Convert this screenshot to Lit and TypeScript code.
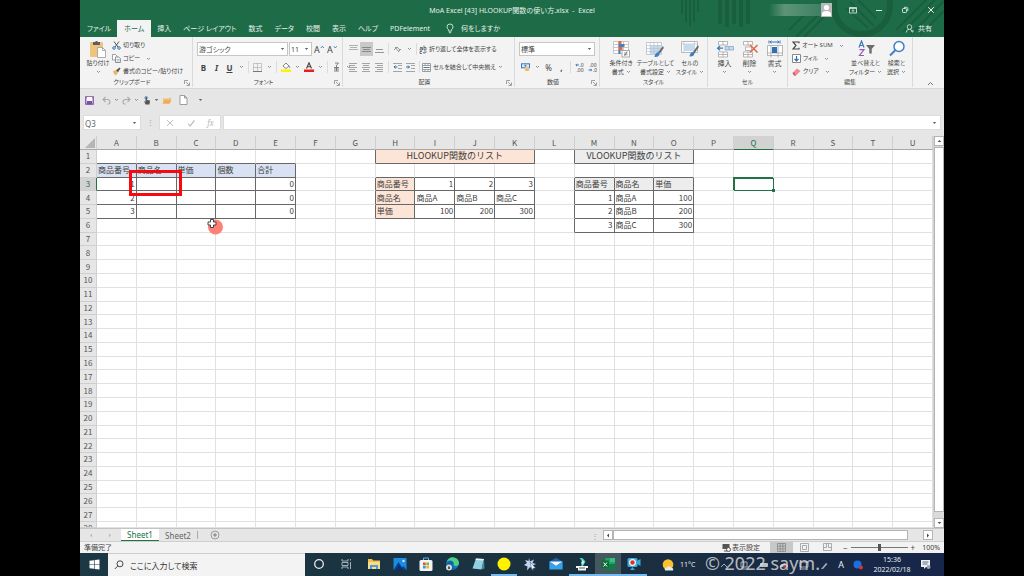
import { LitElement, html, svg, css, nothing } from "lit";
import { customElement, state } from "lit/decorators.js";
import { classMap } from "lit/directives/class-map.js";

type Cell = { t: string; num?: boolean; fill?: string; span?: number; title?: boolean };

const COLS = "ABCDEFGHIJKLMNOPQRSTU".split("");
const ROWS = Array.from({ length: 28 }, (_, i) => i + 1);

const CELLS: Record<string, Cell> = {};
const put = (row: number, col: string, values: (string | number)[], fill = "") => {
  values.forEach((v, i) => {
    const key = COLS[COLS.indexOf(col) + i] + row;
    CELLS[key] = { t: String(v), num: typeof v === "number", fill };
  });
};
put(2, "A", ["商品番号", "商品名", "単価", "個数", "合計"], "blue");
put(3, "A", [1, "", "", "", 0]);
put(4, "A", [2, "", "", "", 0]);
put(5, "A", [3, "", "", "", 0]);
CELLS["H1"] = { t: "HLOOKUP関数のリスト", span: 4, fill: "peach", title: true };
CELLS["M1"] = { t: "VLOOKUP関数のリスト", span: 3, fill: "grey", title: true };
put(3, "I", [1, 2, 3]);
put(4, "I", ["商品A", "商品B", "商品C"]);
put(5, "I", [100, 200, 300]);
put(3, "H", ["商品番号"], "peach");
put(4, "H", ["商品名"], "peach");
put(5, "H", ["単価"], "peach");
put(3, "M", ["商品番号", "商品名", "単価"], "grey");
put(4, "M", [1, "商品A", 100]);
put(5, "M", [2, "商品B", 200]);
put(6, "M", [3, "商品C", 300]);

const chev = html`<svg class="chev" viewBox="0 0 5 4" aria-hidden="true"><path d="M1 1l1.5 1.5L4 1" fill="none" stroke="#777" stroke-width=".8"/></svg>`;
const caret = html`<svg class="caret" viewBox="0 0 5 4" aria-hidden="true"><path d="M.8 1h3.4L2.5 3z" fill="#666"/></svg>`;
const icon = (w: number, h: number, body: unknown) =>
  html`<svg width=${w} height=${h} viewBox="0 0 ${w} ${h}" aria-hidden="true">${body}</svg>`;

const lines = (list: number[][], color = "#8a8a8a") =>
  list.map(([x1, x2, y]) => svg`<path d="M${x1} ${y}H${x2}" stroke=${color} stroke-width="1"/>`);

const I = {
  paste: icon(18, 18, svg`<rect x="1" y="2" width="13" height="15" rx="1" fill="#efc57d"/><path d="M4 2h2q1.500-2 3 0h2v3H4z" fill="#5d5d5d"/><path d="M8.500 7.500h5l3 3v7h-8z" fill="#fff" stroke="#9a9a9a" stroke-width=".8"/><path d="M13.500 7.500v3h3" fill="none" stroke="#9a9a9a" stroke-width=".8"/>`),
  cut: icon(9, 9, svg`<path d="M2 .5l4 5.500M7 .5L3 6" stroke="#555" fill="none"/><circle cx="2" cy="7" r="1.300" fill="none" stroke="#3b78b8"/><circle cx="7" cy="7" r="1.300" fill="none" stroke="#3b78b8"/>`),
  copy: icon(9, 9, svg`<path d="M.5.5h3l1.500 1.500v4H.5z" fill="#fff" stroke="#8b8b8b" stroke-width=".8"/><path d="M3.500 3h3L8.400 4.500v4H3.500z" fill="#fff" stroke="#777" stroke-width=".8"/><path d="M4.500 5.500h3M4.500 7h3" stroke="#5b8cc4" stroke-width=".6"/>`),
  brush: icon(9, 9, svg`<path d="M.8 4l3.400-.8 1.800 1.800L4 8.500Q1.500 7 .8 4z" fill="#efb45d"/><path d="M4 3.200l2 2 2.500-4-.8-.8z" fill="#555"/>`),
  grow: icon(5, 9, svg`<path d="M.8 3L2.300 1.200 3.800 3" fill="none" stroke="#3b78b8" stroke-width=".9"/>`),
  shrink: icon(5, 9, svg`<path d="M.8 1.200L2.300 3 3.800 1.200" fill="none" stroke="#3b78b8" stroke-width=".9"/>`),
  border: icon(9, 9, svg`<path d="M.5.5h8v8h-8zM4.500.5v8M.5 4.500h8" fill="none" stroke="#9b9b9b" stroke-dasharray="1 1"/><path d="M0 8.500h9" stroke="#777"/>`),
  fill: icon(10, 10, svg`<path d="M2 4l3-3 3 3-3 2.500z" fill="#fff" stroke="#666" stroke-width=".8"/><path d="M8.400 3.500q1.600 2 0 2.800z" fill="#3b78b8"/><rect x="0" y="7.500" width="10" height="2.500" fill="#fff200"/>`),
  fontcolor: icon(10, 10, svg`<path d="M2.500 6.500L5 .8l2.500 5.700M3.400 4.700h3.200" fill="none" stroke="#444" stroke-width="1.100"/><rect x="0" y="7.500" width="10" height="2.500" fill="#ee1c1c"/>`),
  ruby: icon(7, 10, svg`<path d="M2 1h3.500L3 4M1 5.500h5M1 7h5M3.500 4v5M1 9h5" fill="none" stroke="#666" stroke-width=".8"/>`),
  top: icon(9, 9, lines([[0, 9, 0.5], [1, 8, 2.5], [0, 9, 4.5]], "#b0b0b0")),
  mid: icon(9, 9, lines([[0, 9, 2.5], [1, 8, 4.5], [0, 9, 6.5]], "#888")),
  bot: icon(9, 9, lines([[1, 8, 4.5], [0, 9, 7.5]], "#999")),
  left: icon(9, 9, lines([[0, 8, 0.5], [0, 6, 2.5], [0, 8, 4.5], [0, 6, 6.5], [0, 8, 8.5]], "#a4a4a4")),
  center: icon(9, 9, lines([[0, 8, 0.5], [1, 7, 2.5], [0, 8, 4.5], [1, 7, 6.5], [0, 8, 8.5]], "#a4a4a4")),
  right: icon(9, 9, lines([[0, 8, 0.5], [2, 8, 2.5], [0, 8, 4.5], [2, 8, 6.5], [0, 8, 8.5]], "#a4a4a4")),
  orient: icon(9, 9, svg`<path d="M1 5l3-3 3 3M2 2l4 5M5 7l3-3" fill="none" stroke="#888" stroke-width=".9"/>`),
  outdent: icon(9, 9, svg`${lines([[0, 9, 0.5], [5, 9, 2.5], [5, 9, 5.5], [0, 9, 8.5]], "#a4a4a4")}<path d="M4.500 4H1M2.500 2.500L1 4l1.500 1.500" fill="none" stroke="#2c6fb5"/>`),
  indent: icon(9, 9, svg`${lines([[0, 9, 0.5], [5, 9, 2.5], [5, 9, 5.5], [0, 9, 8.5]], "#a4a4a4")}<path d="M0 4h3.500M2 2.500L3.500 4 2 5.500" fill="none" stroke="#2c6fb5"/>`),
  wrap: icon(8, 9, svg`<path d="M1 2.500h2.500V5H1V3.800h2M5 .5V5h2V2.500H5M3 6.500H1v2h2" fill="none" stroke="#555" stroke-width=".8"/><path d="M7 6v1.700H4.500M5.500 6.500L4.300 7.700l1.200 1" fill="none" stroke="#3b78b8" stroke-width=".8"/>`),
  merge: icon(9, 9, svg`<path d="M.5.5h8v8h-8zM3 .5v2M6 .5v2M3 6.500v2M6 6.500v2M.5 2.500h8M.5 6.500h8" fill="#fff" stroke="#888" stroke-width=".8"/><path d="M1.500 4.500h6" stroke="#3b78b8"/>`),
  money: icon(10, 9, svg`<rect x=".5" y=".8" width="8" height="4" fill="#dbe8f5" stroke="#3b78b8"/><circle cx="4.500" cy="2.800" r="1" fill="#3b78b8"/><ellipse cx="6" cy="5" rx="2.500" ry="1" fill="#efc57d"/><ellipse cx="6" cy="7" rx="2.500" ry="1" fill="#e8b45e"/>`),
  incdec: icon(9, 9, svg`<path d="M4 2H1M2 .8L.8 2 2 3.200" fill="none" stroke="#3b78b8"/><text x="4.500" y="4" font-size="5" fill="#444">.0</text><text x="1.500" y="9" font-size="5" fill="#444">.00</text>`),
  decdec: icon(9, 9, svg`<text x="1.500" y="4" font-size="5" fill="#444">.00</text><path d="M.5 7h3M2.500 5.800L3.700 7 2.500 8.200" fill="none" stroke="#3b78b8"/><text x="5" y="9" font-size="5" fill="#444">.0</text>`),
  cond: icon(18, 18, svg`<path d="M1.500 1.500h15v12h-15zM6.500 1.500v12M11.500 1.500v12M1.500 4.500h15M1.500 7.500h15M1.500 10.500h15" fill="#fff" stroke="#bbb" stroke-width=".8"/><rect x="6.500" y="1" width="3" height="3" fill="#e2673f"/><rect x="6.500" y="4" width="6" height="3" fill="#4a7fc0"/><rect x="6.500" y="7" width="4" height="3" fill="#e2673f"/><rect x="6.500" y="10" width="2" height="4" fill="#4a7fc0"/><rect x="10" y="10.500" width="7.500" height="6.500" fill="#fff" stroke="#999" stroke-width=".8"/><path d="M12 13h3.500M12 14.700h3.500M15 11.500l-2.500 4.500" stroke="#555" stroke-width=".6"/>`),
  table: icon(18, 18, svg`<path d="M.5 2.500h15v12H.5z" fill="#fff" stroke="#bbb" stroke-width=".8"/><rect x="4" y="5.500" width="11.500" height="9" fill="#c3daf0"/><path d="M.5 5.500h15M.5 8.500h15M.5 11.500h15M4.200 2.500v12M8 2.500v12M11.700 2.500v12" stroke="#b5c3d1" stroke-width=".7"/><path d="M17 6l-5 6.500 1.500 1.300L17.800 8z" fill="#666"/><path d="M12 12.500q-3 0-3.500 4.500 4.500.5 5-3.200z" fill="#3f7fc4"/>`),
  cellstyle: icon(18, 18, svg`<path d="M.5 1.500h16v11H.5z" fill="#fff" stroke="#aaa" stroke-width=".8"/><path d="M3 1.500v11M13.500 1.500v11M.5 4h16" stroke="#bbb" stroke-width=".7"/><rect x="3" y="4" width="10.500" height="7" fill="#c3daf0"/><path d="M17 5l-5 7 1.500 1.300L17.800 7z" fill="#666"/><path d="M12 12q-3 0-3.500 4.500 4.500.5 5-3.200z" fill="#3f7fc4"/>`),
  insert: icon(18, 18, svg`<path d="M2.500 1.500h9v3.500h-9zM7 1.500V5M2.500 12h9v5h-9zM7 12v5M2.500 14.500h9" fill="#fff" stroke="#a5a5a5" stroke-width=".8"/><path d="M9 6.500h8.500v3.500H9zM13 6.500V10" fill="#c3daf0" stroke="#8aa8c5" stroke-width=".8"/><path d="M7 8.200H1.500M4 6L1.500 8.200 4 10.400" fill="none" stroke="#3b78b8" stroke-width="1.200"/>`),
  del: icon(18, 18, svg`<path d="M2.500 1.500h9v3.500h-9zM7 1.500V5M2.500 12h9v5h-9zM7 12v5M2.500 14.500h9M4.500 7h6v3.500h-6z" fill="#fff" stroke="#a5a5a5" stroke-width=".8"/><path d="M9 5l7.500 7.500M16.500 5L9 12.500" stroke="#e2673f" stroke-width="1.500"/>`),
  format: icon(18, 18, svg`<path d="M3 .5v3M14 .5v3M4 2h9M5.500.8L4 2l1.500 1.200M11.500.8L13 2l-1.500 1.200" fill="none" stroke="#3b78b8" stroke-width="1"/><path d="M1.500 5.500h15v10h-15zM5 5.500v12M12 5.500v12M1.500 13h15" fill="#fff" stroke="#a5a5a5" stroke-width=".8"/><rect x="6" y="7" width="5" height="6" fill="#2f6fb6"/>`),
  sum: icon(8, 9, svg`<path d="M7 2.200V1H1l3 3.500L1 8h6V6.800" fill="none" stroke="#444" stroke-width="1.200"/>`),
  down: icon(9, 9, svg`<path d="M.5.500h8v8h-8z" fill="#fff" stroke="#888"/><path d="M4.500 2v5M2.500 5l2 2 2-2" fill="none" stroke="#2f6fb6" stroke-width="1.200"/>`),
  clear: icon(9, 8, svg`<path d="M.5 5L5 .5 8.500 3 4 7.500H2z" fill="#ef8a96"/><path d="M.5 5L2 7.500h2L2.300 4z" fill="#d9606f"/>`),
  sort: icon(18, 18, svg`<path d="M2 7.500L4.500 1 7 7.500M2.800 5.500h3.400" fill="none" stroke="#3b78b8" stroke-width="1.200"/><path d="M2.500 9.700H7L2.500 15.500H7" fill="none" stroke="#9a5bb5" stroke-width="1.200"/><path d="M9 5h9l-3.300 4v4.500h-2.400V9z" fill="#6b6b6b"/>`),
  find: icon(18, 18, svg`<circle cx="11" cy="6.500" r="5" fill="#fff" stroke="#3f7fc4" stroke-width="1.500"/><path d="M7.500 10L2 15.500" stroke="#3f7fc4" stroke-width="2"/>`),
  launcher: icon(6, 6, svg`<path d="M.5 4V.5H4M2 2l3 3M5.500 2.500v3h-3" fill="none" stroke="#888" stroke-width=".8"/>`),
  save: icon(9, 9, svg`<path d="M.8.8h7.400v7.400H.8z" fill="#fff" stroke="#7f4fa6" stroke-width="1.300"/><rect x="2" y="1" width="5" height="3" fill="#fff"/><rect x="2" y="5" width="5" height="3.500" fill="#7f4fa6"/>`),
  undo: icon(9, 9, svg`<path d="M3.500 1L1 3.500 3.500 6M1 3.500h4.500q2.500.3 2.500 2.500T5.500 8" fill="none" stroke="#aaa" stroke-width="1.100"/>`),
  redo: icon(9, 9, svg`<path d="M5.500 1L8 3.500 5.500 6M8 3.500H3.500Q1 3.800 1 6t2.500 2" fill="none" stroke="#aaa" stroke-width="1.100"/>`),
  touch: icon(8, 9, svg`<path d="M2.500 1v5L1 5l1.500 3.500h4L7 4.500 4 4V1z" fill="#555"/><circle cx="3.200" cy="1.800" r="1.500" fill="none" stroke="#5b8cc4" stroke-width=".7"/>`),
  open: icon(10, 9, svg`<path d="M1 7.500V2.500h5l3-1v3z" fill="#e9c07c"/><path d="M.5 7.800l2-3.500h7l-2 3.500z" fill="#f0ad4e"/>`),
  page: icon(9, 10, svg`<path d="M1 .5h4.500l2.500 2.500v6.500H1zM5.500.5V3H8" fill="#fff" stroke="#888" stroke-width=".8"/>`),
  bulb: icon(8, 11, svg`<path d="M2.700 7Q1 5.500 1 3.800 1 1 4 1t3 2.800Q7 5.500 5.300 7v1.200H2.700zM2.900 9.700h2.200" fill="none" stroke="#dcebe2" stroke-width=".9"/>`),
  share: icon(9, 9, svg`<circle cx="4.500" cy="3" r="2.300" fill="none" stroke="#dcebe2" stroke-width=".8"/><path d="M1 8.500q.5-3 3-3.200M5 5.300q2 .2 2.500 3.200M6 7h3" fill="none" stroke="#dcebe2" stroke-width=".8"/>`),
  ribbonopt: icon(8, 8, svg`<path d="M.5 1.500h7v5.500h-7zM.5 2.500h7M4 6V4M3 4.700L4 3.700l1 1" fill="none" stroke="#e5f0ea" stroke-width=".8"/>`),
  min: icon(8, 8, svg`<path d="M1 4.500h6" stroke="#e5f0ea"/>`),
  restore: icon(8, 8, svg`<rect x="1.500" y="2.500" width="4" height="4" rx=".8" fill="none" stroke="#e5f0ea" stroke-width=".9"/><path d="M3 1.300h2.500q1.300 0 1.300 1.300V5" fill="none" stroke="#e5f0ea" stroke-width=".9"/>`),
  close: icon(8, 8, svg`<path d="M1.200 1.200l5.600 5.600M6.800 1.200L1.200 6.800" stroke="#fff" stroke-width=".9"/>`),
  user: icon(11, 14, svg`<rect width="11" height="14" fill="#b9b9b9"/><circle cx="5.500" cy="4.500" r="2.600" fill="#fff"/><path d="M1 13V10.500Q1.500 8 5.500 8t4.500 2.500V13z" fill="#fff"/>`),
  win: icon(11, 11, svg`<path d="M.5 1.800L5 1.200v4H.5zM5.600 1.100L10.500.4v4.800H5.600zM.5 5.800H5v4L.5 9.200zM5.600 5.800h4.900v4.800l-4.900-.7z" fill="#fff"/>`),
  glass: icon(10, 10, svg`<circle cx="6" cy="3.800" r="3" fill="none" stroke="#333" stroke-width=".9"/><path d="M3.800 6L.8 9" stroke="#333" stroke-width=".9"/>`),
};

const TASK = [
  { n: "Cortana", w: true, g: icon(14, 14, svg`<circle cx="7" cy="7" r="4.300" fill="none" stroke="#e8eef0" stroke-width="1.300"/>`) },
  { n: "タスク ビュー", w: true, g: icon(14, 14, svg`<path d="M2 2v2h6V2M2 12v-2h6v2M2 5.500h6v3H2zM10.500 2v1.500M10.500 5v7" fill="none" stroke="#9fb0b6" stroke-width="1"/>`) },
  { n: "エクスプローラー", g: icon(14, 14, svg`<path d="M1 2h4l1 1.500h7V12H1z" fill="#f3c04b"/><path d="M1 5h12v7H1z" fill="#fbdc7e"/><path d="M3 12V8h8v4H9V10H5v2z" fill="#4c9be0"/>`) },
  { n: "フォト", g: icon(14, 14, svg`<rect x=".5" y="1" width="13" height="12" fill="#1d8be0"/><path d="M.5 13l5-8 3.500 5.500 1.500-1.500 3 4z" fill="#0b3f8c"/><path d="M2.500 13l4-5 4 5z" fill="#0a2f6c"/><circle cx="10.500" cy="4" r="1.200" fill="#cfe8ff"/>`) },
  { n: "Store", g: icon(14, 14, svg`<path d="M4.500 3V1h5v2" fill="none" stroke="#58b6ea"/><rect x=".5" y="3" width="13" height="11" rx="1.500" fill="#f4f4f4"/><path d="M4 5.500h2.700v2.700H4z" fill="#e8502e"/><path d="M7.300 5.500H10v2.700H7.300z" fill="#7ab930"/><path d="M4 8.800h2.700v2.700H4z" fill="#2f9de0"/><path d="M7.300 8.800H10v2.700H7.300z" fill="#f3b71c"/>`) },
  { n: "Edge", g: icon(14, 14, svg`<circle cx="7.500" cy="6.500" r="6.300" fill="#1277c9"/><path d="M1.500 5Q4-.5 9 .4q5 1 5 6.100-.5 2.500-3.500 2.500-2.500-.3-1.500-2.500Q8 3 4.500 3.500q-2 .3-3 1.500z" fill="#4ed17c"/><path d="M3 5q4-2 5 1-2 4 3 6-7 2-9-4z" fill="#155da5"/><circle cx="4" cy="10.500" r="3" fill="#d8d8d8"/><path d="M3 9.500h2v2.500H3z" fill="#555"/>`) },
  { n: "メモ帳", g: icon(14, 14, svg`<path d="M5 1.500l8 .5-2.500 10.500-9-1z" fill="#8fd0e2"/><path d="M5 1.500l8 .5-.3 1.400-8.200-.5z" fill="#e8f3f5"/><path d="M10.500 12.500L13 2l.5 9.500z" fill="#4f8a9b"/>`) },
  { n: "マーカー", on: true, g: icon(14, 14, svg`<circle cx="7" cy="7" r="6.500" fill="#fff200"/>`) },
  { n: "ポインター", g: icon(14, 14, svg`<path d="M6 1l1 3.500 4-2-1.500 3.500 3.500 1-3.500 1.500 1 4-3.500-2.500-3 3.500.5-4L1 8l3-2-2-3 3.500 1z" fill="#c4d5f2"/><path d="M7 5l5.500 6-2.500.3-.8 2.200z" fill="#fff" stroke="#35508a" stroke-width=".5"/>`) },
  { n: "メール", g: icon(14, 14, svg`<path d="M.5 4.500h13V12H.5z" fill="#1673c5"/><path d="M.5 4.500L7 .8l6.500 3.700L7 9z" fill="#1a62ad"/><path d="M.5 4.500h13L7 9z" fill="#f3f8fc"/><path d="M.5 4.800L7 9l6.500-4.200V12.500H.5z" fill="#36a2ea"/>`) },
  { n: "Filmora", on: true, g: icon(14, 14, svg`<path d="M4.500 1h3l3 3.500L8 9H6l1.500-4z" fill="#3fd0c0"/><path d="M7.500 3l2 1.800L7.500 8 6 6z" fill="#bdf4ec"/><path d="M1 9h12v2H1zM3 11h8v2.500H3z" fill="#f4f4f4"/><path d="M4 11h6" stroke="#24404a" stroke-width=".8"/>`) },
  { n: "Excel", on: true, active: true, g: icon(14, 14, svg`<rect x="4" y="1" width="10" height="12" rx="1" fill="#21a366"/><path d="M9 1h5v4H9z" fill="#33c481"/><path d="M4 7h10v6H4z" fill="#107c41"/><rect x=".5" y="3.500" width="7.500" height="7.500" rx=".8" fill="#0f6b39"/><path d="M2.500 5.500L6 9.500M6 5.500L2.500 9.500" stroke="#fff" stroke-width="1"/>`) },
  { n: "録画", on: true, g: icon(14, 14, svg`<rect x=".5" y="1" width="10" height="9" rx="1.500" fill="#38a9d8"/><path d="M10 4l3.500-2v7L10 7z" fill="#38a9d8"/><circle cx="5.500" cy="5.500" r="3.500" fill="#e8f4fa"/><circle cx="5.500" cy="5.500" r="2.200" fill="#e0342b"/><path d="M3 13l2.500-3L8 13z" fill="#38a9d8"/>`) },
];

const TRAY = [
  svg`<path d="M2 7l3-3 3 3" fill="none" stroke="#d0d8e0"/>`,
  svg`<path d="M2 2h6v5H2zM3 9h4" fill="none" stroke="#d0d8e0"/>`,
  svg`<rect x="1" y="3" width="8" height="4" rx="1" fill="#f2f2f2"/>`,
  svg`<path d="M1 7q0-3 3-3 1-2 3 0 2 0 2 3z" fill="#d9dee3"/><circle cx="6" cy="6.500" r="2" fill="#dc3c34"/>`,
  svg`<path d="M1 2h8v5H1zM3 9h4" fill="none" stroke="#d0d8e0"/>`,
  svg`<path d="M2 9l5-6 1.500 1L4 9z" fill="#d0d8e0"/>`,
];

@customElement("app-root")
export class AppRoot extends LitElement {
  @state() private zoom = 100;
  @state() private activeTab = "ホーム";

  static styles = css`
    :host {
      display: block;
      height: 100vh;
      padding: 0 80px;
      box-sizing: border-box;
      background: #000;
      overflow: hidden;
      font: 7px/9px "Noto Sans", "Noto Sans CJK JP", sans-serif;
      color: #444;
    }
    * { box-sizing: border-box; }
    svg { display: block; flex: none; }
    button, input, select {
      font: inherit; color: inherit; background: none; border: 0; padding: 0; margin: 0;
      min-width: 0; border-radius: 0; outline: 0;
    }
    button { white-space: nowrap; }
    .ui { font-feature-settings: "palt"; }
    .window { display: flex; flex-direction: column; height: 100%; background: #e6e6e6; position: relative; }

    .head { background: #1e6b47; color: #e5f0ea; position: relative; }
    .decor { position: absolute; right: 0; top: 0; height: 100%; width: 270px; }
    .title { position: relative; height: 20px; display: grid; grid-template-columns: 1fr auto 1fr; align-items: center; }
    .title h1 { font: inherit; margin: 0; grid-column: 2; white-space: pre; font-feature-settings: normal; }
    .wctl { display: flex; justify-content: flex-end; align-items: center; }
    .wctl button { width: 26px; height: 16px; display: grid; place-items: center; }
    .name { width: 52px; height: 12px; background: linear-gradient(90deg, #1e6b47, #5d9478 30%, #3f8062); }
    .user { margin-right: 8px; }
    .tabs { position: relative; height: 17px; display: flex; align-items: stretch; padding-left: 1px; }
    .tabs button { padding: 0 6px; height: 17px; }
    .tabs button.on { background: #f3f3f3; color: #1e6b47; padding: 0 7px; }
    .tabs .tell { display: flex; align-items: center; gap: 7px; padding: 0 10px; }
    .tabs .share { display: flex; align-items: center; gap: 4px; margin-left: auto; padding: 0 12px; }

    .ribbon {
      display: grid; grid-template-columns: 113fr 150fr 172fr 85fr 108fr 80fr 125fr 31fr;
      height: 52px; background: #f3f3f3; border-bottom: 1px solid #d6d6d6; font-size: 6px;
    }
    .group { display: flex; flex-direction: column; border-right: 1px solid #dadada; padding: 2px 0 0 4px; margin-bottom: 1px; min-width: 0; }
    .g-cell { font-size: 7px; }
    .g-end { border: 0; align-items: center; justify-content: flex-end; }
    .body { flex: 1; display: flex; }
    .label { display: flex; align-items: center; height: 9px; font-size: 6px; }
    .label span { flex: 1; text-align: center; padding-right: 4px; }
    .label button { width: 8px; }
    .stack { display: flex; flex-direction: column; }
    .stack button { height: 13px; display: flex; align-items: center; gap: 2px; }
    .rows { display: flex; flex-direction: column; gap: 4px; padding-top: 3px; flex: 1; }
    .row { display: flex; align-items: center; height: 14px; }
    .tool { width: 13px; height: 14px; display: grid; place-items: center; font-size: 8px; flex: none; }
    .tool.on { background: #c9c9c9; }
    .dd { width: 10px; height: 14px; display: grid; place-items: center; flex: none; }
    .wide { display: flex; align-items: center; gap: 2px; }
    .bold { font-weight: 700; } .ital { font-style: italic; font-weight: 700; } .und { text-decoration: underline; font-weight: 700; }
    .sep { width: 1px; height: 12px; background: #dcdcdc; margin: 0 2px; flex: none; }
    .chev, .caret { width: 5px; height: 4px; }
    .pick { display: flex; align-items: center; height: 14px; border: 1px solid #c6c6c6; background: #fff; padding-right: 2px; font-size: 7px; }
    .pick select { appearance: none; flex: 1; padding-left: 1px; }
    .p-font { width: 91px; margin-right: 1px; } .p-size { width: 23px; margin-right: 2px; } .p-num { width: 76px; }
    .glyph { display: flex; width: 13px; height: 14px; align-items: center; font-size: 9px; flex: none; }
    .large { display: flex; flex-direction: column; align-items: center; gap: 1px; padding-top: 1px; flex: 1; }
    .large .l2 { display: flex; align-items: center; gap: 2px; height: 8px; }
    .large .l1 { height: 8px; }
    .g-clip .large { flex: 0 0 28px; }
    .g-edit .stack { width: 58px; }
    .stack .chev { margin-left: 4px; }

    .qat { height: 24px; display: flex; align-items: center; padding: 0 5px 2px; }
    .qat button { height: 14px; display: grid; place-items: center; }
    .q { width: 9px; } .qd { width: 11px; } .qs { width: 8px; }
    .fbar { height: 23px; display: flex; padding: 2px 3px 6px 3px; }
    .fbar > * { background: #fff; border: 1px solid #dcdcdc; display: flex; align-items: center; }
    .fbar .nb { width: 58px; padding: 1px 3px 0 1px; font-size: 8px; }
    .fbar .nb input { flex: 1; width: 20px; color: #666; }
    .fbar .dots { width: 18px; background: none; border: 0; justify-content: center; color: #999; }
    .fbar .fx { width: 62px; justify-content: space-around; margin-right: 2px; color: #bbb; }
    .fbar .fx button { font-size: 8px; }
    .fbar .fin { flex: 1; padding-right: 3px; }
    .fbar .fin input { flex: 1; }

    .work { flex: 1; min-height: 0; display: flex; position: relative; }
    .sheet {
      flex: 1; min-width: 0; display: grid; background: #fff; overflow: hidden; color: #404040;
      grid-template-rows: 14px repeat(27, minmax(0, 1fr)) 6px;
      font: 8px/12px "Noto Sans CJK JP", sans-serif;
    }
    .sheet thead, .sheet tbody { display: contents; }
    .sheet tr { display: grid; grid-template-columns: 17px repeat(21, minmax(0, 1fr)); min-height: 0; }
    .sheet th, .sheet td {
      padding: 0 1px; font-weight: 400; white-space: nowrap; overflow: hidden; min-width: 0; min-height: 0;
      border: 0 solid #e1e1e1; border-width: 0 1px 1px 0; text-align: left; display: flex; align-items: center;
    }
    .sheet th { background: #e6e6e6; justify-content: center; color: #555; padding: 0; }
    .sheet thead th { border-color: #cfcfcf; border-bottom-color: #a8a8a8; }
    .sheet tbody th { border-color: #cfcfcf; }
    .sheet thead th.sel { background: #d2d2d2; color: #217346; border-bottom-color: #217346; }
    .sheet tbody th.sel { background: #d2d2d2; color: #217346; border-right-color: #217346; }
    .sheet td.num { justify-content: flex-end; }
    .sheet td.cap { justify-content: center; font-size: 9px; }
    .sheet td.span4 { grid-column: span 4; } .sheet td.span3 { grid-column: span 3; }
    .sheet td.blue { background: #d9e2f2; } .sheet td.peach { background: #fce4d6; } .sheet td.grey { background: #ededed; }
    .sheet td.dr { border-right-color: #686868; } .sheet td.db { border-bottom-color: #686868; }
    .sheet td.cursor { position: relative; z-index: 1; outline: 1px solid #217346; outline-offset: -1px; box-shadow: -1px -1px 0 #217346; overflow: visible; }
    .sheet td.cursor::after { content: ""; position: absolute; right: -2px; bottom: -2px; width: 3px; height: 3px; background: #217346; }
    .sheet th.last { align-items: flex-start; }
    .vbar { width: 11px; background: #dadada; display: flex; flex-direction: column; border-left: 1px solid #d0d0d0; }
    .corner svg { margin-left: auto; }
    .vbar button, .hbar button { background: #fff; border: 1px solid #b5b5b5; display: grid; place-items: center; flex: none; }
    .vbar button { height: 10px; }
    .vthumb { height: 93%; background: #fff; border: 1px solid #b5b5b5; margin: 1px 0 auto; }

    .mark { position: absolute; left: 49px; top: 34px; width: 53px; height: 26px; border: 3px solid #f8090d; }
    .point { position: absolute; left: 126px; top: 81px; }

    .sheets { height: 13px; display: flex; align-items: stretch; border-top: 1px solid #c4c4c4; font-size: 8px; padding-left: 5px; color: #666; }
    .sheets button { display: flex; align-items: center; justify-content: center; }
    .nav { width: 12px; } .nav2 { width: 24px; justify-content: flex-start; }
    .tabb { width: 38px; }
    .tabb.on { background: #fff; color: #217346; border-bottom: 1px solid #217346; }
    .sheets .sp { width: 1px; background: #aaa; margin: 2px 12px 2px 0; }
    .hbar { margin-left: auto; width: 353px; display: flex; align-items: center; padding: 1px 11px 1px 0; }
    .hbar .dots { width: 12px; color: #999; }
    .hbar button { width: 10px; height: 10px; }
    .hthumb { flex: 0 1 295px; height: 10px; background: #fff; border: 1px solid #b5b5b5; margin-right: auto; }
    .status { height: 12px; background: #f2f2f2; display: flex; align-items: center; border-top: 1px solid #cfcfcf; padding: 0 4px 0 4px; }
    .status .disp { margin-left: auto; display: flex; align-items: center; gap: 1px; margin-right: 10px; }
    .view { width: 23px; height: 11px; display: grid; place-items: center; }
    .view.on { background: #c8c8c8; }
    .zoom { display: flex; align-items: center; gap: 3px; margin-left: 4px; font-size: 8px; }
    .zoom input { width: 57px; height: 9px; appearance: none; }
    .zoom input::-webkit-slider-runnable-track { height: 1px; background: #777; }
    .zoom input::-webkit-slider-thumb { appearance: none; width: 3px; height: 7px; margin-top: -3px; background: #555; }
    .zoom output { font-size: 7px; margin-left: 4px; }

    .task { height: 23px; display: flex; align-items: stretch; background: linear-gradient(90deg, #1b3844, #1b303f 60%, #17264a); color: #e8edf2; position: relative; }
    .task button { display: grid; place-items: center; flex: none; }
    .start { width: 28px; }
    .search { width: 197px; background: #f3f3f3; display: flex; align-items: center; gap: 6px; padding-left: 6px; color: #333; border-top: 1px solid #ccc; }
    .search input { flex: 1; font-size: 8px; height: 16px; }
    .search input::placeholder { color: #333; opacity: 1; }
    .app { width: 26px; border-bottom: 2px solid transparent; }
    .app.w { width: 28px; }
    .app.run { border-bottom-color: #76b9ed; }
    .app.active { background: #43595f; }
    .weather { display: flex; align-items: center; gap: 6px; margin-left: 15px; }
    .tray { display: flex; align-items: center; gap: 10px; margin-left: auto; opacity: .75; }
    .ime { font-size: 9px; margin-left: 9px; align-self: center; }
    .blob { margin: 0 10px 0 9px; align-self: center; }
    .clock { width: 38px; display: flex; flex-direction: column; justify-content: center; text-align: center; line-height: 10px; }
    .note { width: 28px; margin-right: 5px; }
    .watermark { position: absolute; right: 124px; top: 0; font: 18px/20px "Noto Sans", sans-serif; color: rgba(225, 225, 225, .8); white-space: nowrap; }
  `;

  private large(ic: unknown, l1: string, l2 = "") {
    return html`<button class="large">${ic}<span class="l1">${l1}</span><span class="l2">${l2}${chev}</span></button>`;
  }
  private dd(label: string) {
    return html`<button class="dd" aria-label=${label}>${chev}</button>`;
  }
  private tool(label: string, body: unknown, on = false) {
    return html`<button class=${classMap({ tool: true, on })} aria-label=${label}>${body}</button>`;
  }
  private label(text: string, launch = true) {
    return html`<div class="label"><span>${text}</span>${launch ? html`<button aria-label="${text}の設定">${I.launcher}</button>` : nothing}</div>`;
  }

  private renderHead() {
    const tabs = ["ファイル", "ホーム", "挿入", "ページ レイアウト", "数式", "データ", "校閲", "表示", "ヘルプ", "PDFelement"];
    return html`<header class="head ui">
      <svg class="decor" viewBox="0 0 270 37" aria-hidden="true">
        <g stroke="#185c3b" stroke-width="2" fill="none" opacity=".75">
          <path d="M8 0v14M12 0v22M16 0v26M20 0v22M24 0v12"/>
          <path d="M46 0v24M53 0v27M60 0v24M67 0v27M74 0v24" stroke-width="4"/>
          <path d="M122 37l34-34M130 37l24-24M115 30l24-24"/>
          <circle cx="188" cy="6" r="28" stroke-width="6"/><path d="M172 8l22 20M176 2l24 24M184 0l18 18"/>
          <path d="M222 30l30-30M229 32l32-32M237 34l33-33M246 35l24-24"/>
        </g>
      </svg>
      <div class="title">
        <h1>MoA Excel [43] HLOOKUP関数の使い方.xlsx  -  Excel</h1>
        <div class="wctl"><span class="name"></span><span class="user">${I.user}</span>
          <button aria-label="リボンの表示オプション">${I.ribbonopt}</button><button aria-label="最小化">${I.min}</button>
          <button aria-label="元に戻す">${I.restore}</button><button aria-label="閉じる">${I.close}</button></div>
      </div>
      <nav class="tabs">
        ${tabs.map((t) => html`<button class=${classMap({ on: t === this.activeTab })} @click=${() => (this.activeTab = t)}>${t}</button>`)}
        <button class="tell">${I.bulb}何をしますか</button>
        <button class="share">${I.share}共有</button>
      </nav>
    </header>`;
  }

  private renderRibbon() {
    const sep = html`<span class="sep"></span>`;
    return html`<section class="ribbon ui">
      <div class="group g-clip"><div class="body">
        ${this.large(I.paste, "貼り付け")}
        <div class="stack"><button>${I.cut}切り取り</button><button>${I.copy}コピー ${chev}</button><button>${I.brush}書式のコピー/貼り付け</button></div>
      </div>${this.label("クリップボード")}</div>
      <div class="group g-font"><div class="body rows">
        <div class="row">
          <label class="pick p-font"><select aria-label="フォント"><option>游ゴシック</option></select>${caret}</label>
          <label class="pick p-size"><select aria-label="サイズ"><option>11</option></select>${caret}</label>
          <button class="glyph" aria-label="拡大"><span>A</span>${I.grow}</button><button class="glyph" aria-label="縮小"><span>A</span>${I.shrink}</button>
        </div>
        <div class="row">
          ${this.tool("太字", html`<span class="bold">B</span>`)}${this.tool("斜体", html`<span class="ital">I</span>`)}${this.tool("下線", html`<span class="und">U</span>`)}${this.dd("下線の種類")}
          ${sep}${this.tool("罫線", I.border)}${this.dd("罫線の種類")}${sep}${this.tool("塗りつぶし", I.fill)}${this.dd("塗りの色")}${this.tool("文字色", I.fontcolor)}${this.dd("文字の色")}${sep}${this.tool("ふりがな", I.ruby)}${this.dd("ふりがなの設定")}
        </div>
      </div>${this.label("フォント")}</div>
      <div class="group g-align"><div class="body rows">
        <div class="row">${this.tool("上揃え", I.top)}${this.tool("上下中央", I.mid, true)}${this.tool("下揃え", I.bot)}${sep}${this.tool("方向", I.orient)}${this.dd("方向の種類")}${sep}
          <button class="wide">${I.wrap}折り返して全体を表示する</button></div>
        <div class="row">${this.tool("左揃え", I.left)}${this.tool("中央揃え", I.center)}${this.tool("右揃え", I.right)}${sep}${this.tool("インデントを減らす", I.outdent)}${this.tool("インデントを増やす", I.indent)}${sep}
          <button class="wide">${I.merge}セルを結合して中央揃え</button>${this.dd("結合の種類")}</div>
      </div>${this.label("配置")}</div>
      <div class="group g-num"><div class="body rows">
        <div class="row"><label class="pick p-num"><select aria-label="表示形式"><option>標準</option></select>${caret}</label></div>
        <div class="row">${this.tool("通貨", I.money)}${this.dd("通貨の種類")}${this.tool("パーセント", "%")}${this.tool("桁区切り", html`<b>,</b>`)}${sep}${this.tool("小数点以下を増やす", I.incdec)}${this.tool("小数点以下を減らす", I.decdec)}</div>
      </div>${this.label("数値")}</div>
      <div class="group g-style"><div class="body">${this.large(I.cond, "条件付き", "書式")}${this.large(I.table, "テーブルとして", "書式設定")}${this.large(I.cellstyle, "セルの", "スタイル")}</div>${this.label("スタイル", false)}</div>
      <div class="group g-cell"><div class="body">${this.large(I.insert, "挿入")}${this.large(I.del, "削除")}${this.large(I.format, "書式")}</div>${this.label("セル", false)}</div>
      <div class="group g-edit"><div class="body">
        <div class="stack"><button>${I.sum}オート SUM ${chev}</button><button>${I.down}フィル ${chev}</button><button>${I.clear}クリア ${chev}</button></div>
        ${this.large(I.sort, "並べ替えと", "フィルター")}${this.large(I.find, "検索と", "選択")}
      </div>${this.label("編集", false)}</div>
      <div class="group g-end"><button aria-label="リボンを折りたたむ">${icon(7, 6, svg`<path d="M1 4l2.500-2.500L6 4" fill="none" stroke="#666" stroke-width=".9"/>`)}</button></div>
    </section>`;
  }

  private inBlock(r: number, c: number) {
    if (r === 1) return (c >= 7 && c <= 10) || (c >= 12 && c <= 14);
    return !!CELLS[COLS[c] + r];
  }

  private renderCell(r: number, c: number) {
    if (r === 1 && ((c > 7 && c <= 10) || (c > 12 && c <= 14))) return nothing;
    const cell = CELLS[COLS[c] + r];
    const me = this.inBlock(r, c);
    const cls = {
      num: !!cell?.num, cap: !!cell?.title, span4: cell?.span === 4, span3: cell?.span === 3,
      blue: cell?.fill === "blue", peach: cell?.fill === "peach", grey: cell?.fill === "grey",
      dr: me || this.inBlock(r, c + 1), db: me || this.inBlock(r + 1, c), cursor: r === 3 && c === 16,
    };
    return html`<td class=${classMap(cls)} colspan=${cell?.span ?? 1}>${cell?.t ?? ""}</td>`;
  }

  private renderSheet() {
    return html`<main class="work">
      <table class="sheet">
        <thead><tr><th class="corner">${icon(12, 12, svg`<path d="M11 1v10H1z" fill="#b5b5b5"/>`)}</th>
          ${COLS.map((c) => html`<th scope="col" class=${classMap({ sel: c === "Q" })}>${c}</th>`)}</tr></thead>
        <tbody>${ROWS.map((r) => html`<tr><th scope="row" class=${classMap({ sel: r === 3, last: r === 28 })}>${r}</th>${COLS.map((_, c) => this.renderCell(r, c))}</tr>`)}</tbody>
      </table>
      <div class="vbar"><button aria-label="上へ">${icon(5, 4, svg`<path d="M.5 3L2.500 1l2 2z" fill="#555"/>`)}</button><div class="vthumb"></div><button aria-label="下へ">${icon(5, 4, svg`<path d="M.5 1l2 2 2-2z" fill="#555"/>`)}</button></div>
      <div class="mark"></div>
      <svg class="point" width="18" height="18" viewBox="0 0 18 18" aria-hidden="true"><circle cx="9.500" cy="10" r="7.500" fill="#ff8075"/><path d="M4.500 2.500h3v2.500h2.500v3H7.500v2.500h-3V8H2V5h2.500z" fill="#fff" stroke="#333" stroke-width=".9"/></svg>
    </main>`;
  }

  render() {
    return html`<div class="window">
      ${this.renderHead()}${this.renderRibbon()}
      <div class="qat">
        <button class="q" aria-label="保存">${I.save}</button><span class="qs"></span>
        <button class="q" aria-label="元に戻す">${I.undo}</button><button class="qd" aria-label="履歴">${chev}</button>
        <button class="q" aria-label="やり直し">${I.redo}</button><button class="qd" aria-label="やり直し履歴">${chev}</button>
        <button class="q" aria-label="タッチ">${I.touch}</button><button class="qd" aria-label="タッチの設定">${caret}</button>
        <button class="q" aria-label="開く">${I.open}</button><span class="qs"></span>
        <button class="q" aria-label="新規">${I.page}</button><span class="qs"></span>
        <button class="q" aria-label="カスタマイズ">${caret}</button>
      </div>
      <div class="fbar">
        <label class="nb"><input aria-label="名前ボックス" value="Q3">${caret}</label>
        <span class="dots">⋮</span>
        <div class="fx"><button aria-label="キャンセル">${icon(8, 8, svg`<path d="M1 1l6 6M7 1L1 7" stroke="#c0c0c0"/>`)}</button>
          <button aria-label="入力">${icon(8, 8, svg`<path d="M1 4.500L3 7l4.500-5.500" fill="none" stroke="#c0c0c0" stroke-width="1.200"/>`)}</button><button aria-label="関数の挿入"><i>fx</i></button></div>
        <label class="fin"><input aria-label="数式バー">${caret}</label>
      </div>
      ${this.renderSheet()}
      <div class="sheets">
        <button class="nav" aria-label="前">${icon(4, 5, svg`<path d="M3 .5v4l-2-2z" fill="#bbb"/>`)}</button><button class="nav nav2" aria-label="次">${icon(12, 5, svg`<path d="M6 .5v4l2-2z" fill="#bbb"/>`)}</button>
        <button class="tabb on">Sheet1</button><button class="tabb">Sheet2</button><span class="sp"></span>
        <button aria-label="新しいシート">${icon(10, 10, svg`<circle cx="5" cy="5" r="4" fill="none" stroke="#888" stroke-width=".8"/><path d="M5 3v4M3 5h4" stroke="#777" stroke-width=".9"/>`)}</button>
        <div class="hbar"><span class="dots">⋮</span><button aria-label="左へ">${icon(4, 5, svg`<path d="M3 .5v4l-2-2z" fill="#444"/>`)}</button><div class="hthumb"></div><button aria-label="右へ">${icon(4, 5, svg`<path d="M1 .5v4l2-2z" fill="#444"/>`)}</button></div>
      </div>
      <footer class="status ui"><span>準備完了</span>
        <button class="disp">${icon(9, 9, svg`<rect x=".5" y="1" width="7" height="5" fill="#555"/><path d="M2 8h3" stroke="#555"/><circle cx="6.500" cy="6.500" r="2" fill="#f2f2f2" stroke="#555"/>`)}表示設定</button>
        <button class="view on" aria-label="標準">${icon(9, 9, svg`<path d="M.5.5h8v8h-8zM3.200.5v8M5.900.5v8M.5 3.200h8M.5 5.900h8" fill="none" stroke="#888" stroke-width=".8"/>`)}</button>
        <button class="view" aria-label="ページ レイアウト">${icon(9, 9, svg`<path d="M.5.5h8v8h-8zM2.500 2.500h4v4h-4z" fill="none" stroke="#999" stroke-width=".8"/>`)}</button>
        <button class="view" aria-label="改ページ プレビュー">${icon(9, 9, svg`<path d="M.5.500h8v7h-8zM3.500.5v4h-3M5.500.5v4h3" fill="none" stroke="#999" stroke-width=".8"/>`)}</button>
        <div class="zoom"><button aria-label="縮小">−</button><input type="range" aria-label="ズーム" min="10" max="190" .value=${String(this.zoom)} @input=${(e: Event) => (this.zoom = Number((e.target as HTMLInputElement).value))}><button aria-label="拡大">+</button><output>${this.zoom}%</output></div>
      </footer>
      <footer class="task">
        <button class="start" aria-label="スタート">${I.win}</button>
        <label class="search ui">${I.glass}<input type="text" aria-label="検索" placeholder="ここに入力して検索"></label>
        ${TASK.map((t) => html`<button class=${classMap({ app: true, w: !!t.w, run: !!t.on, active: !!t.active })} aria-label=${t.n}>${t.g}</button>`)}
        <span class="weather">${icon(12, 12, svg`<circle cx="6" cy="5.500" r="5.300" fill="#fbc22d"/><path d="M3 11.500q-1-3 2-3 1.500-2.500 4 0 3 .5 2 3z" fill="#e4eaf0"/>`)}11°C</span>
        <span class="tray">${TRAY.map((t) => icon(10, 10, t))}</span><span class="ime">A</span>
        <span class="blob">${icon(10, 10, svg`<circle cx="4.500" cy="4.500" r="4" fill="#1b6fe0"/><circle cx="8" cy="7.500" r="2" fill="#d9342b"/>`)}</span>
        <span class="clock"><span>15:36</span><span>2022/02/18</span></span>
        <button class="note" aria-label="通知">${icon(11, 11, svg`<path d="M1 1h9v7H6l-2 2V8H1z" fill="#eef2f5"/><path d="M2.500 3h6M2.500 5h5" stroke="#24364f" stroke-width=".7"/><circle cx="8.500" cy="8" r="2" fill="#9aa6b2"/>`)}</button>
        <span class="watermark">© 2022 saym.</span>
      </footer>
    </div>`;
  }
}
